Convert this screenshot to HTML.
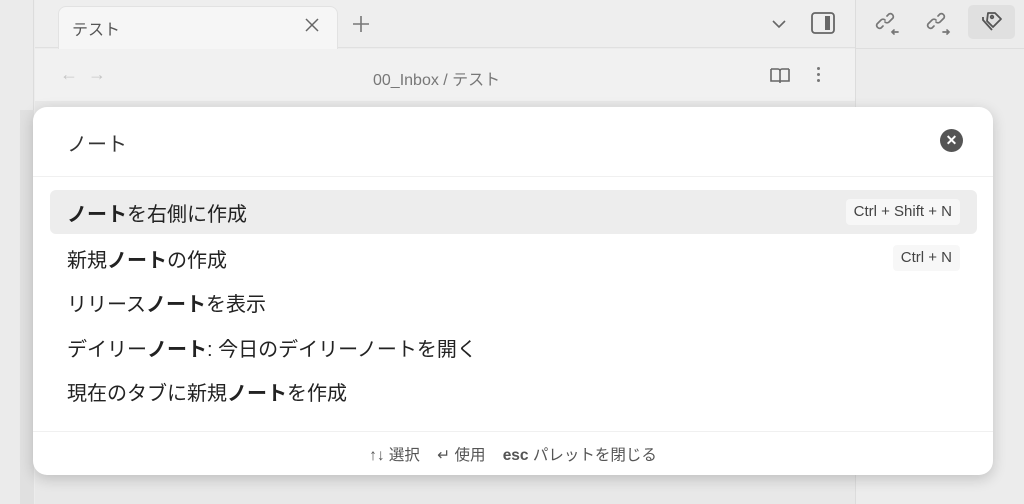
<!DOCTYPE html>
<html><head><meta charset="utf-8">
<style>
*{box-sizing:border-box;margin:0;padding:0}
body{width:1024px;height:504px;overflow:hidden;background:#ececec;font-family:"Liberation Sans","Noto Sans CJK JP",sans-serif;position:relative;color:#222}
.abs{position:absolute}
.it{position:absolute;left:34px;font-size:20px;color:#222}
.kb{position:absolute;right:33px;height:26px;padding:0 8px;background:#f7f7f7;border-radius:4px;font-size:15px;line-height:26px;color:#444}
</style></head><body>
<div class="abs" style="left:0;top:0;width:34px;height:504px;background:#ebebeb;border-right:1px solid #dcdcdc"></div>
<div class="abs" style="left:20px;top:110px;width:14px;height:394px;background:#e0e0e0"></div>
<div class="abs" style="left:35px;top:0;width:820px;height:48px;background:#eeeeee;border-bottom:1px solid #e0e0e0"></div>
<div class="abs" style="left:58px;top:6px;width:280px;height:43px;background:#f6f6f6;border:1px solid #e2e2e2;border-bottom:none;border-radius:8px 8px 0 0"></div>
<div class="abs" style="left:72px;top:16px;font-size:16px;color:#555">テスト</div>
<svg class="abs" style="left:304px;top:17px" width="16" height="16"><path d="M2 2l12 12M14 2L2 14" stroke="#666" stroke-width="1.5"/></svg>
<svg class="abs" style="left:351px;top:14px" width="20" height="20"><path d="M10 2v16M2 10h16" stroke="#777" stroke-width="1.6"/></svg>
<svg class="abs" style="left:770px;top:16px" width="18" height="16"><path d="M3 5l6 6 6-6" fill="none" stroke="#666" stroke-width="1.6"/></svg>
<svg class="abs" style="left:810px;top:11px" width="26" height="24"><rect x="2" y="2" width="22" height="20" rx="3" fill="none" stroke="#666" stroke-width="1.8"/><rect x="15" y="5" width="5" height="14" fill="#666"/></svg>
<div class="abs" style="left:855px;top:0;width:169px;height:504px;background:#ececec;border-left:1px solid #dcdcdc"></div>
<div class="abs" style="left:856px;top:48px;width:168px;height:1px;background:#dedede"></div>
<svg class="abs" style="left:874px;top:9px" width="28" height="28"><g fill="none" stroke="#777" stroke-width="1.7" stroke-linecap="round"><path d="M9 17l-2 2a3 3 0 0 1-4-4l4-4a3 3 0 0 1 4 0"/><path d="M13 7l2-2a3 3 0 0 1 4 4l-4 4a3 3 0 0 1-4 0"/><path d="M24 23h-6m2-2l-2 2 2 2"/></g></svg>
<svg class="abs" style="left:925px;top:9px" width="28" height="28"><g fill="none" stroke="#777" stroke-width="1.7" stroke-linecap="round"><path d="M9 17l-2 2a3 3 0 0 1-4-4l4-4a3 3 0 0 1 4 0"/><path d="M13 7l2-2a3 3 0 0 1 4 4l-4 4a3 3 0 0 1-4 0"/><path d="M18 23h6m-2-2l2 2-2 2"/></g></svg>
<div class="abs" style="left:968px;top:5px;width:47px;height:34px;background:#e0e0e0;border-radius:5px"></div>
<svg class="abs" style="left:976px;top:8px" width="30" height="30"><g fill="none" stroke="#555" stroke-width="1.8" stroke-linejoin="round"><path d="M12 5h7l6 6-8 8-6-6z"/><circle cx="16" cy="9" r="1.3"/><path d="M7 9v3l9 10"/></g></svg>
<div class="abs" style="left:35px;top:49px;width:820px;height:52px;background:#f1f1f1"></div>
<div class="abs" style="left:60px;top:64px;font-size:18px;color:#c6c6c6">← &nbsp;→</div>
<div class="abs" style="left:373px;top:66px;font-size:16px;color:#777">00_Inbox / テスト</div>
<svg class="abs" style="left:769px;top:66px" width="22" height="20"><path d="M2 3h7a2 2 0 0 1 2 2v12M20 3h-7a2 2 0 0 0-2 2M2 3v12h9M20 3v12h-9" fill="none" stroke="#666" stroke-width="1.6"/></svg>
<div class="abs" style="left:817px;top:67px;width:3px;height:3px;background:#777;border-radius:50%;box-shadow:0 6px #777,0 12px #777"></div>
<div class="abs" style="left:35px;top:101px;width:820px;height:403px;background:#e8e8e8"></div>
<div class="abs" style="left:33px;top:107px;width:960px;height:368px;background:#fff;border-radius:14px;box-shadow:0 4px 14px rgba(0,0,0,0.18)">
  <div class="abs" style="left:34px;top:21px;font-size:20px;color:#333">ノート</div>
  <div class="abs" style="left:907px;top:22px;width:23px;height:23px;border-radius:50%;background:#555;color:#fff;font-size:14px;font-weight:bold;text-align:center;line-height:23px">✕</div>
  <div class="abs" style="left:0;top:69px;width:960px;height:1px;background:#f0f0f0"></div>
  <div class="abs" style="left:17px;top:83px;width:927px;height:44px;background:#ededed;border-radius:6px"></div>
  <div class="it" style="top:91px"><b>ノート</b>を右側に作成</div>
  <div class="kb" style="top:92px">Ctrl + Shift + N</div>
  <div class="it" style="top:137px">新規<b>ノート</b>の作成</div>
  <div class="kb" style="top:138px">Ctrl + N</div>
  <div class="it" style="top:181px">リリース<b>ノート</b>を表示</div>
  <div class="it" style="top:226px">デイリー<b>ノート</b>: 今日のデイリーノートを開く</div>
  <div class="it" style="top:270px">現在のタブに新規<b>ノート</b>を作成</div>
  <div class="abs" style="left:0;top:324px;width:960px;height:1px;background:#f0f0f0"></div>
  <div class="abs" style="left:0;top:336px;width:960px;text-align:center;font-size:15.5px;color:#555;padding-left:0">↑↓ 選択 &nbsp;&nbsp;&nbsp;↵ 使用 &nbsp;&nbsp;&nbsp;<b>esc</b> パレットを閉じる</div>
</div>
</body></html>
